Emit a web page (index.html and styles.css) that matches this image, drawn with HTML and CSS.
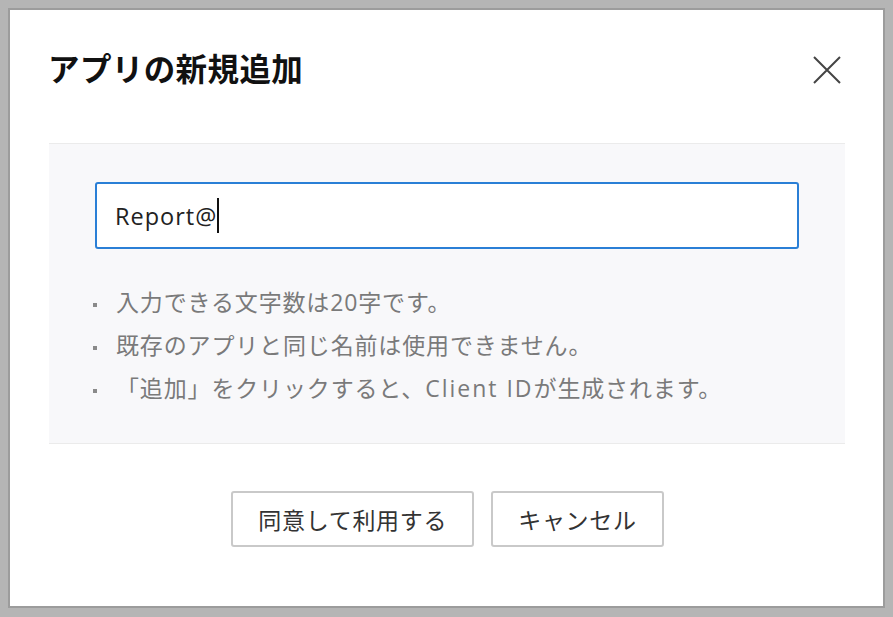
FILE: index.html
```html
<!DOCTYPE html>
<html lang="ja">
<head>
    <meta charset="UTF-8">
    <title>アプリの新規追加</title>
    <meta name="viewport" content="width=device-width, initial-scale=1.0">
    <link rel="stylesheet" href="styles.css">
</head>
<body>
    <div class="backdrop">
        <div class="modal">
            <div class="modal-header">
                <h2 class="modal-title">アプリの新規追加</h2>
                <button class="modal-close" aria-label="閉じる">
                    <svg width="28" height="28" viewBox="0 0 28 28">
                        <path d="M1 1 L27 27 M27 1 L1 27" stroke="#444" stroke-width="2" fill="none"/>
                    </svg>
                </button>
            </div>

            <div class="modal-body">
                <div class="name-input">
                    <span>Report@</span><span class="caret"></span>
                </div>
                <ul class="notes">
                    <li>入力できる文字数は20字です。</li>
                    <li>既存のアプリと同じ名前は使用できません。</li>
                    <li>「追加」をクリックすると、<span class="latin">Client ID</span>が生成されます。</li>
                </ul>
            </div>

            <div class="modal-footer">
                <button class="btn">同意して利用する</button>
                <button class="btn">キャンセル</button>
            </div>
        </div>
    </div>
</body>
</html>
```

FILE: styles.css
```css
body {
    margin: 0;
    font-family: "Open Sans", "Noto Sans CJK JP", sans-serif;
    background: #b5b5b5;
}
.backdrop {
    width: 893px;
    height: 617px;
    padding: 8px;
    box-sizing: border-box;
}
.modal {
    width: 877px;
    height: 600px;
    box-sizing: border-box;
    background: #fff;
    border: 2px solid #9c9c9c;
    display: flex;
    flex-direction: column;
}
/* header */
.modal-header {
    height: 133px;
    display: flex;
    align-items: center;
    justify-content: space-between;
    padding: 0 42px 14px 38px;
    box-sizing: border-box;
}
.modal-title {
    margin: 0 0 3px 0;
    font-family: "Noto Sans CJK JP", sans-serif;
    font-size: 31.5px;
    font-weight: bold;
    letter-spacing: 0.4px;
    color: #111;
    line-height: 1;
}
.modal-close {
    border: none;
    background: none;
    padding: 0;
    width: 28px;
    height: 28px;
    cursor: pointer;
}
/* body */
.modal-body {
    margin: 0 38px 0 39px;
    background: #f8f8fa;
    border-top: 1px solid #ebebeb;
    border-bottom: 1px solid #ebebeb;
    padding: 38px 46px 34px 46px;
    height: 301px;
    box-sizing: border-box;
}
.name-input {
    height: 67px;
    box-sizing: border-box;
    border: 2px solid #2a7fd6;
    border-radius: 3px;
    background: #fff;
    padding: 0 18px;
    display: flex;
    align-items: center;
    font-size: 23.5px;
    letter-spacing: 1px;
    color: #222;
}
.caret {
    display: inline-block;
    width: 2px;
    height: 35px;
    background: #111;
}
.notes {
    list-style: none;
    margin: 32px 0 0 0;
    padding: 0;
}
.notes li {
    position: relative;
    padding-left: 21px;
    font-size: 23px;
    letter-spacing: 0.85px;
    line-height: 43px;
    color: #7a7a7a;
    white-space: nowrap;
}
.notes li::before {
    content: "";
    position: absolute;
    left: -2px;
    top: 22px;
    width: 4px;
    height: 4px;
    background: #8a8a8a;
}
.notes .latin {
    letter-spacing: 2px;
}
/* footer */
.modal-footer {
    display: flex;
    justify-content: center;
    gap: 17px;
    padding-top: 47px;
    padding-left: 2px;
}
.btn {
    height: 56px;
    padding: 0 25px;
    background: #fff;
    border: 2px solid #c9c9c9;
    border-radius: 3px;
    font-family: inherit;
    font-size: 23px;
    letter-spacing: 0.7px;
    color: #333;
    cursor: pointer;
}
```
